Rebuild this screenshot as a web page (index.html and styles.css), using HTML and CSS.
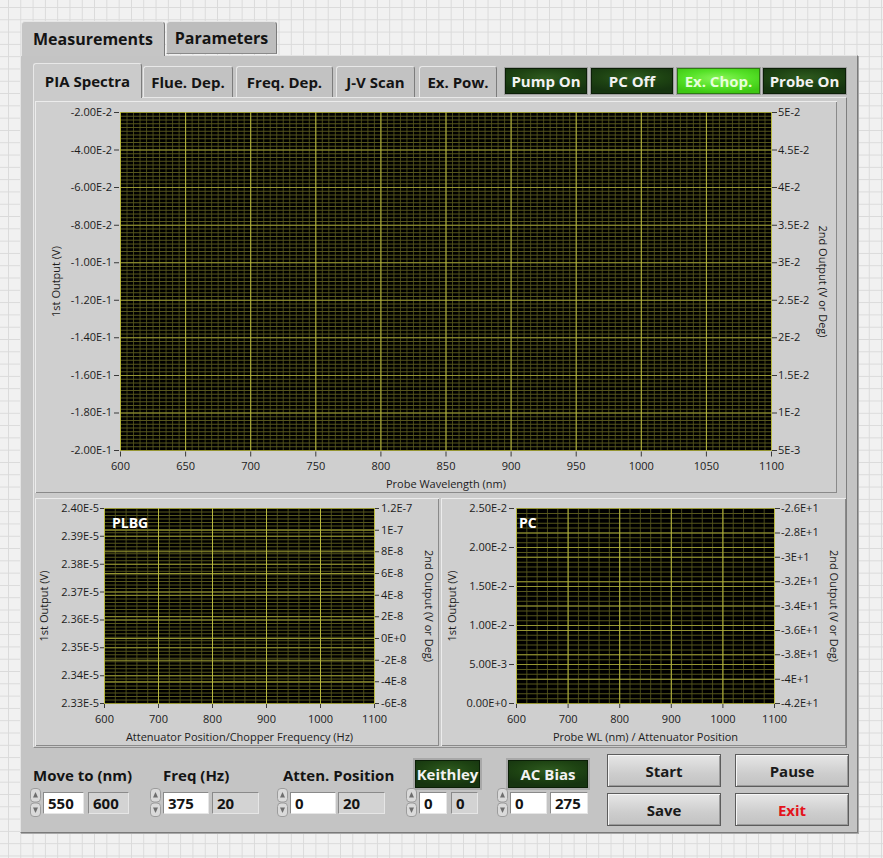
FILE: index.html
```html
<!DOCTYPE html>
<html>
<head>
<meta charset="utf-8">
<title>PIA Spectra</title>
<link rel="stylesheet" href="styles.css">
</head>
<body>
<div class="app">
  <div class="otabs">
    <div class="otab sel">Measurements</div>
    <div class="otab par">Parameters</div>
  </div>
  <div class="obody">
    <div class="itabs">
      <div class="itab sel t1">PIA Spectra</div>
      <div class="itab t2">Flue. Dep.</div>
      <div class="itab t3">Freq. Dep.</div>
      <div class="itab t4">J-V Scan</div>
      <div class="itab t5">Ex. Pow.</div>
      <div class="leds">
        <div class="led l1">Pump On</div>
        <div class="led l2">PC Off</div>
        <div class="led on l3">Ex. Chop.</div>
        <div class="led l4">Probe On</div>
      </div>
    </div>
    <div class="ibody">
      <div class="gpanel gmain">
        <svg class="chart" width="802" height="392" viewBox="0 0 802 392">
          <rect x="85" y="11" width="652" height="339" class="bg"/>
          <line x1="85" y1="180.5" x2="737" y2="180.5" class="minv" stroke-width="339" stroke-dasharray="1 5.51"/>
          <line x1="411" y1="11" x2="411" y2="350" class="minh" stroke-width="652" stroke-dasharray="1 2.7556"/>
          <line x1="411" y1="11" x2="411" y2="350" class="majh" stroke-width="652" stroke-dasharray="1 36.556"/>
          <line x1="85" y1="180.5" x2="737" y2="180.5" class="majv" stroke-width="339" stroke-dasharray="1 64.1"/>
          <line x1="81.5" y1="11" x2="81.5" y2="350" class="tick" stroke-width="5" stroke-dasharray="1 36.556"/>
          <line x1="739.5" y1="11" x2="739.5" y2="350" class="tick" stroke-width="5" stroke-dasharray="1 36.556"/>
          <line x1="85" y1="353" x2="737" y2="353" class="tick" stroke-width="5" stroke-dasharray="1 64.1"/>
          <g class="tk" text-anchor="end">
            <text x="77" y="15">-2.00E-2</text>
            <text x="77" y="52.6">-4.00E-2</text>
            <text x="77" y="90.1">-6.00E-2</text>
            <text x="77" y="127.7">-8.00E-2</text>
            <text x="77" y="165.2">-1.00E-1</text>
            <text x="77" y="202.8">-1.20E-1</text>
            <text x="77" y="240.3">-1.40E-1</text>
            <text x="77" y="277.9">-1.60E-1</text>
            <text x="77" y="315.4">-1.80E-1</text>
            <text x="77" y="353">-2.00E-1</text>
          </g>
          <g class="tk">
            <text x="743" y="15">5E-2</text>
            <text x="743" y="52.6">4.5E-2</text>
            <text x="743" y="90.1">4E-2</text>
            <text x="743" y="127.7">3.5E-2</text>
            <text x="743" y="165.2">3E-2</text>
            <text x="743" y="202.8">2.5E-2</text>
            <text x="743" y="240.3">2E-2</text>
            <text x="743" y="277.9">1.5E-2</text>
            <text x="743" y="315.4">1E-2</text>
            <text x="743" y="353">5E-3</text>
          </g>
          <g class="tk" text-anchor="middle">
            <text x="85.5" y="369">600</text>
            <text x="150.6" y="369">650</text>
            <text x="215.7" y="369">700</text>
            <text x="280.8" y="369">750</text>
            <text x="345.9" y="369">800</text>
            <text x="411" y="369">850</text>
            <text x="476.1" y="369">900</text>
            <text x="541.2" y="369">950</text>
            <text x="606.3" y="369">1000</text>
            <text x="671.4" y="369">1050</text>
            <text x="736.5" y="369">1100</text>
            <text x="411" y="387">Probe Wavelength (nm)</text>
            <text transform="translate(25 180.5) rotate(-90)">1st Output (V)</text>
            <text transform="translate(784 180.5) rotate(90)">2nd Output (V or Deg)</text>
          </g>
        </svg>
      </div>
      <div class="grow">
        <div class="gpanel gsmall">
          <svg class="chart" width="404" height="248" viewBox="0 0 404 248">
            <rect x="69" y="10" width="271" height="196" class="bg"/>
            <line x1="69" y1="108" x2="340" y2="108" class="minv" stroke-width="196" stroke-dasharray="1 9.8"/>
            <line x1="204.5" y1="10" x2="204.5" y2="206" class="minh" stroke-width="271" stroke-dasharray="1 2.482"/>
            <line x1="204.5" y1="10" x2="204.5" y2="206" class="majh" stroke-width="271" stroke-dasharray="1 26.857"/>
            <line x1="204.5" y1="10" x2="204.5" y2="206" class="majh" stroke-width="271" stroke-dasharray="1 20.667"/>
            <line x1="69" y1="108" x2="340" y2="108" class="majv" stroke-width="196" stroke-dasharray="1 53"/>
            <line x1="67" y1="10" x2="67" y2="206" class="tick" stroke-width="4" stroke-dasharray="1 26.857"/>
            <line x1="342" y1="10" x2="342" y2="206" class="tick" stroke-width="4" stroke-dasharray="1 20.667"/>
            <line x1="69" y1="208" x2="340" y2="208" class="tick" stroke-width="4" stroke-dasharray="1 53"/>
            <text x="77" y="30" class="gname">PLBG</text>
            <g class="tk" text-anchor="end">
              <text x="64" y="14">2.40E-5</text>
              <text x="64" y="41.9">2.39E-5</text>
              <text x="64" y="69.7">2.38E-5</text>
              <text x="64" y="97.6">2.37E-5</text>
              <text x="64" y="125.4">2.36E-5</text>
              <text x="64" y="153.3">2.35E-5</text>
              <text x="64" y="181.1">2.34E-5</text>
              <text x="64" y="209">2.33E-5</text>
            </g>
            <g class="tk">
              <text x="346" y="14">1.2E-7</text>
              <text x="346" y="35.7">1E-7</text>
              <text x="346" y="57.3">8E-8</text>
              <text x="346" y="79">6E-8</text>
              <text x="346" y="100.7">4E-8</text>
              <text x="346" y="122.3">2E-8</text>
              <text x="346" y="144">0E+0</text>
              <text x="346" y="165.7">-2E-8</text>
              <text x="346" y="187.3">-4E-8</text>
              <text x="346" y="209">-6E-8</text>
            </g>
            <g class="tk" text-anchor="middle">
              <text x="69.5" y="225">600</text>
              <text x="123.5" y="225">700</text>
              <text x="177.5" y="225">800</text>
              <text x="231.5" y="225">900</text>
              <text x="285.5" y="225">1000</text>
              <text x="339.5" y="225">1100</text>
              <text x="204.5" y="243">Attenuator Position/Chopper Frequency (Hz)</text>
              <text transform="translate(13 108) rotate(-90)">1st Output (V)</text>
              <text transform="translate(390 108) rotate(90)">2nd Output (V or Deg)</text>
            </g>
          </svg>
        </div>
        <div class="gpanel gsmall">
          <svg class="chart" width="405" height="248" viewBox="0 0 405 248">
            <rect x="75" y="10" width="259" height="196" class="bg"/>
            <line x1="75" y1="108" x2="334" y2="108" class="minv" stroke-width="196" stroke-dasharray="1 9.32"/>
            <line x1="204.5" y1="10" x2="204.5" y2="206" class="minh" stroke-width="259" stroke-dasharray="1 3.875"/>
            <line x1="204.5" y1="10" x2="204.5" y2="206" class="majh" stroke-width="259" stroke-dasharray="1 38"/>
            <line x1="204.5" y1="10" x2="204.5" y2="206" class="majh" stroke-width="259" stroke-dasharray="1 23.375"/>
            <line x1="75" y1="108" x2="334" y2="108" class="majv" stroke-width="196" stroke-dasharray="1 50.6"/>
            <line x1="70.5" y1="10" x2="70.5" y2="206" class="tick" stroke-width="5" stroke-dasharray="1 38"/>
            <line x1="336.5" y1="10" x2="336.5" y2="206" class="tick" stroke-width="5" stroke-dasharray="1 23.375"/>
            <line x1="75" y1="208" x2="334" y2="208" class="tick" stroke-width="4" stroke-dasharray="1 50.6"/>
            <text x="78" y="30" class="gname">PC</text>
            <g class="tk" text-anchor="end">
              <text x="66" y="14">2.50E-2</text>
              <text x="66" y="53">2.00E-2</text>
              <text x="66" y="92">1.50E-2</text>
              <text x="66" y="131">1.00E-2</text>
              <text x="66" y="170">5.00E-3</text>
              <text x="66" y="209">0.00E+0</text>
            </g>
            <g class="tk">
              <text x="340" y="14">-2.6E+1</text>
              <text x="340" y="38.4">-2.8E+1</text>
              <text x="340" y="62.8">-3E+1</text>
              <text x="340" y="87.1">-3.2E+1</text>
              <text x="340" y="111.5">-3.4E+1</text>
              <text x="340" y="135.9">-3.6E+1</text>
              <text x="340" y="160.3">-3.8E+1</text>
              <text x="340" y="184.6">-4E+1</text>
              <text x="340" y="209">-4.2E+1</text>
            </g>
            <g class="tk" text-anchor="middle">
              <text x="75.5" y="225">600</text>
              <text x="127.1" y="225">700</text>
              <text x="178.7" y="225">800</text>
              <text x="230.3" y="225">900</text>
              <text x="281.9" y="225">1000</text>
              <text x="333.5" y="225">1100</text>
              <text x="204.5" y="243">Probe WL (nm) / Attenuator Position</text>
              <text transform="translate(15 108) rotate(-90)">1st Output (V)</text>
              <text transform="translate(389 108) rotate(90)">2nd Output (V or Deg)</text>
            </g>
          </svg>
        </div>
      </div>
    </div>
    <div class="controls">
      <div class="grp g1">
        <div class="lbl">Move to (nm)</div>
        <div class="num">
          <svg class="spin" width="11" height="29" viewBox="0 0 11 29"><rect x="0.5" y="0.5" width="10" height="13.5" rx="3.5" class="sb"/><rect x="0.5" y="15" width="10" height="13.5" rx="3.5" class="sb"/><path d="M5.5 4L8 9.5H3z" class="sa"/><path d="M5.5 25L8 19.5H3z" class="sa"/></svg>
          <div class="fld a">550</div><div class="fld ind b">600</div>
        </div>
      </div>
      <div class="grp g2">
        <div class="lbl">Freq (Hz)</div>
        <div class="num">
          <svg class="spin" width="11" height="29" viewBox="0 0 11 29"><rect x="0.5" y="0.5" width="10" height="13.5" rx="3.5" class="sb"/><rect x="0.5" y="15" width="10" height="13.5" rx="3.5" class="sb"/><path d="M5.5 4L8 9.5H3z" class="sa"/><path d="M5.5 25L8 19.5H3z" class="sa"/></svg>
          <div class="fld a">375</div><div class="fld ind b">20</div>
        </div>
      </div>
      <div class="grp g3">
        <div class="lbl">Atten. Position</div>
        <div class="num">
          <svg class="spin" width="11" height="29" viewBox="0 0 11 29"><rect x="0.5" y="0.5" width="10" height="13.5" rx="3.5" class="sb"/><rect x="0.5" y="15" width="10" height="13.5" rx="3.5" class="sb"/><path d="M5.5 4L8 9.5H3z" class="sa"/><path d="M5.5 25L8 19.5H3z" class="sa"/></svg>
          <div class="fld a">0</div><div class="fld ind b">20</div>
        </div>
      </div>
      <div class="grp g4">
        <div class="gbtn">Keithley</div>
        <div class="num">
          <svg class="spin" width="11" height="29" viewBox="0 0 11 29"><rect x="0.5" y="0.5" width="10" height="13.5" rx="3.5" class="sb"/><rect x="0.5" y="15" width="10" height="13.5" rx="3.5" class="sb"/><path d="M5.5 4L8 9.5H3z" class="sa"/><path d="M5.5 25L8 19.5H3z" class="sa"/></svg>
          <div class="fld a">0</div><div class="fld ind b">0</div>
        </div>
      </div>
      <div class="grp g5">
        <div class="gbtn">AC Bias</div>
        <div class="num">
          <svg class="spin" width="11" height="29" viewBox="0 0 11 29"><rect x="0.5" y="0.5" width="10" height="13.5" rx="3.5" class="sb"/><rect x="0.5" y="15" width="10" height="13.5" rx="3.5" class="sb"/><path d="M5.5 4L8 9.5H3z" class="sa"/><path d="M5.5 25L8 19.5H3z" class="sa"/></svg>
          <div class="fld a">0</div><div class="fld b">275</div>
        </div>
      </div>
      <div class="btns">
        <div class="btn">Start</div>
        <div class="btn">Pause</div>
        <div class="btn">Save</div>
        <div class="btn exit">Exit</div>
      </div>
    </div>
  </div>
</div>
</body>
</html>
```
FILE: styles.css
```css
html, body {
  margin: 0;
  padding: 0;
}
body {
  width: 883px;
  height: 858px;
  overflow: hidden;
  font-family: "Open Sans", "Noto Sans", sans-serif;
  color: #141414;
  background-color: #f1f1f1;
  background-image:
    linear-gradient(#dadada 1px, transparent 1px),
    linear-gradient(90deg, #dadada 1px, transparent 1px);
  background-size: 12.3px 12.3px;
  background-position: 8px 7px;
}
.app {
  margin: 21px 0 0 20px;
  width: 838px;
}
/* outer tabs */
.otabs {
  display: flex;
  align-items: flex-end;
  height: 34px;
}
.otab {
  box-sizing: border-box;
  display: flex;
  align-items: center;
  justify-content: center;
  font-weight: 700;
  font-size: 16px;
  border: 1px solid;
  border-color: #e6e6e6 #7a7a7a transparent #e6e6e6;
  border-bottom: none;
  border-radius: 4px 4px 0 0;
  background: #c5c5c5;
}
.otab.sel {
  position: relative;
  z-index: 1;
  width: 144px;
  height: 35px;
  margin-left: 1px;
  margin-bottom: -1px;
}
.otab.par {
  width: 111px;
  height: 33px;
  margin-left: 1px;
  margin-bottom: 1px;
  background: #bdbdbd;
  border-bottom: 1px solid #8a8a8a;
}
.obody {
  box-sizing: border-box;
  height: 778px;
  background: #c4c4c4;
  border: 1px solid;
  border-color: #e4e4e4 #7a7a7a #7a7a7a #e4e4e4;
  box-shadow: 1px 1px 0 #a9a9a9;
  padding: 7px 10px 0 12px;
}
/* inner tabs */
.itabs {
  display: flex;
  align-items: flex-end;
  height: 34px;
}
.itab {
  box-sizing: border-box;
  display: flex;
  align-items: center;
  justify-content: center;
  font-weight: 700;
  font-size: 15px;
  height: 31px;
  border: 1px solid;
  border-color: #e8e8e8 #7c7c7c transparent #e8e8e8;
  border-bottom: none;
  border-radius: 3px 3px 0 0;
  background: #c2c2c2;
}
.itab.sel {
  position: relative;
  z-index: 1;
  height: 35px;
  margin-bottom: -1px;
  background: #cbcbcb;
}
.t1 { width: 109px; }
.t2 { width: 90px; margin-left: 1px; }
.t3 { width: 97px; margin-left: 3px; }
.t4 { width: 79px; margin-left: 3px; }
.t5 { width: 78px; margin-left: 4px; }
.leds {
  display: flex;
  margin-left: 8px;
  margin-bottom: 3px;
}
.led {
  box-sizing: border-box;
  height: 26px;
  display: flex;
  align-items: center;
  justify-content: center;
  font-weight: 700;
  font-size: 15px;
  color: #f2f2f2;
  background: radial-gradient(ellipse 70% 60% at 50% 35%, #2e5a1f 0%, #1d4212 60%, #163410 100%);
  border: 1px solid #0b1f07;
  box-shadow: 0 0 0 1px #9e9e9e;
}
.led.on {
  color: #e6ffd9;
  background: radial-gradient(ellipse 70% 60% at 50% 40%, #8af55a 0%, #56e228 55%, #3fc814 100%);
  border-color: #2d7a12;
}
.l1 { width: 82px; }
.l2 { width: 82px; margin-left: 4px; }
.l3 { width: 83px; margin-left: 4px; }
.l4 { width: 83px; margin-left: 3px; }
.ibody {
  box-sizing: border-box;
  height: 651px;
  width: 814px;
  background: #cbcbcb;
  border: 1px solid;
  border-color: #e8e8e8 #7e7e7e #8e8e8e #e8e8e8;
  padding: 3px 0 0 1px;
}
.gpanel {
  background: #cfcfcf;
  box-shadow: inset 1px 1px 0 #ececec, inset -1px -1px 0 #8a8a8a;
}
.gmain {
  width: 802px;
  height: 392px;
}
.grow {
  display: flex;
  gap: 2px;
  margin-top: 5px;
  height: 248px;
}
.gsmall {
  flex: none;
  height: 248px;
}
.chart {
  display: block;
}
.chart .bg { fill: #000; }
.chart .minv { stroke: #48481a; }
.chart .minh { stroke: #56561d; }
.chart .majh { stroke: #959532; }
.chart .majv { stroke: #b8b840; }
.chart .tick { stroke: #3a3a3a; }
.chart .tk {
  font-family: "Open Sans", "Noto Sans", sans-serif;
  font-size: 11px;
  fill: #1c1c1c;
}
.chart .gname {
  font-family: "Open Sans", "Noto Sans", sans-serif;
  font-size: 14px;
  font-weight: 700;
  fill: #ffffff;
}
/* controls */
.controls {
  display: flex;
  align-items: flex-start;
  margin-left: -3px;
  padding-top: 6px;
}
.grp {
  display: flex;
  flex-direction: column;
  flex: none;
}
.lbl {
  height: 25px;
  line-height: 25px;
  font-weight: 700;
  font-size: 15px;
  white-space: nowrap;
}
.g1 { margin-top: 9px; width: 100px; }
.g1 .lbl { padding-left: 3px; }
.g2 { margin-top: 9px; margin-left: 20px; width: 109px; }
.g2 .lbl { padding-left: 13px; }
.g3 { margin-top: 9px; margin-left: 18px; width: 108px; }
.g3 .lbl { padding-left: 6px; }
.g4 { margin-top: 6px; margin-left: 21px; width: 74px; }
.g5 { margin-top: 6px; margin-left: 17px; width: 91px; }
.num {
  display: flex;
  align-items: center;
  height: 29px;
}
.spin {
  flex: none;
  margin-right: 2px;
}
.spin .sb { fill: #dadada; stroke: #9c9c9c; }
.spin .sa { fill: #6e6e6e; }
.fld {
  box-sizing: border-box;
  flex: none;
  height: 22px;
  background: #ffffff;
  border: 1px solid;
  border-color: #8a8a8a #e6e6e6 #e6e6e6 #8a8a8a;
  font-weight: 700;
  font-size: 15px;
  line-height: 20px;
  padding-left: 4px;
}
.fld.ind { background: #d3d3d3; }
.g1 .a { width: 41px; }
.g1 .b { width: 41px; margin-left: 4px; }
.g2 .a { width: 46px; }
.g2 .b { width: 47px; margin-left: 3px; }
.g3 .a { width: 46px; }
.g3 .b { width: 47px; margin-left: 2px; }
.g4 .a { width: 28px; }
.g4 .b { width: 27px; margin-left: 4px; }
.g5 .a { width: 37px; }
.g5 .b { width: 38px; margin-left: 3px; }
.gbtn {
  box-sizing: border-box;
  height: 28px;
  display: flex;
  align-items: center;
  justify-content: center;
  font-weight: 700;
  font-size: 15px;
  color: #f2f2f2;
  white-space: nowrap;
  background: radial-gradient(ellipse 70% 60% at 50% 35%, #2e5a1f 0%, #1d4212 60%, #163410 100%);
  border: 1px solid #0b1f07;
  box-shadow: 0 0 0 2px #a8a8a8;
}
.g4 .gbtn { width: 65px; margin-left: 9px; }
.g5 .gbtn { width: 80px; margin-left: 11px; }
.btns {
  display: grid;
  flex: none;
  grid-template-columns: 114px 114px;
  grid-auto-rows: 33px;
  column-gap: 14px;
  row-gap: 6px;
  margin-left: 19px;
}
.btn {
  box-sizing: border-box;
  display: flex;
  align-items: center;
  justify-content: center;
  font-weight: 700;
  font-size: 15px;
  color: #1a1a1a;
  border: 1px solid #5c5c5c;
  background: linear-gradient(#e6e6e6, #cdcdcd 60%, #c2c2c2);
  box-shadow: inset 1px 1px 0 #f6f6f6, inset -1px -1px 0 #9a9a9a;
}
.btn.exit { color: #e3141c; }
```
